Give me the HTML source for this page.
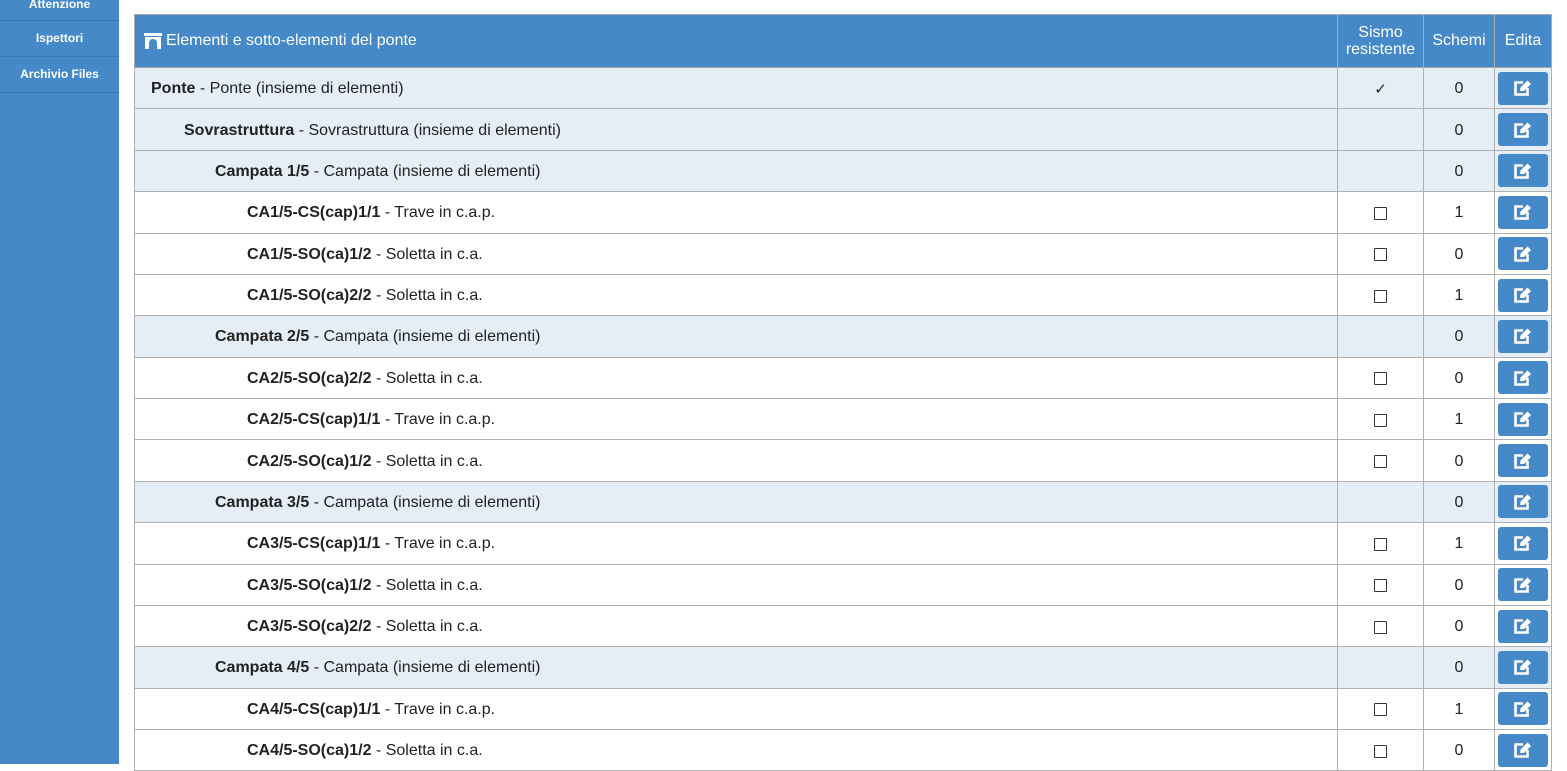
<!DOCTYPE html>
<html><head><meta charset="utf-8"><style>
body{margin:0;width:1567px;height:764px;overflow:hidden;background:#fff;font-family:"Liberation Sans",sans-serif;position:relative}
.side{position:absolute;left:0;top:0;width:119px;height:764px;background:#4589c8}
.side div{color:#fff;font-size:12px;font-weight:bold;text-align:center;height:35px;line-height:35px;border-bottom:1px solid #3a78b3}
.wrap{position:absolute;left:134px;top:14px;width:1418px}
.row{display:flex;height:41.375px;box-sizing:border-box;border-bottom:1px solid #b0b0b0;border-left:1px solid #b0b0b0;border-right:1px solid #b0b0b0;font-size:16px;color:#222}
.row>div{box-sizing:border-box;display:flex;align-items:center;padding-top:2px}
.c1{width:1203px;border-right:1px solid #b0b0b0}
.c2{width:86px;border-right:1px solid #b0b0b0;justify-content:center}
.c3{width:71px;border-right:1px solid #b0b0b0;justify-content:center}
.c4{flex:1;justify-content:center}
.g{background:#e5edf6}
.hd{height:54px;background:#4589c8;color:#fff;border:1px solid #a8a8a8;border-bottom:1px solid #a8a8a8}
.hd>div{border-color:#a8a8a8;padding-top:0!important}
.btn{width:50px;height:33px;background:#4589c8;border-radius:3px;display:flex;align-items:center;justify-content:center;margin-top:-2px}
.cb{width:11px;height:11px;border:1.5px solid #333;border-radius:1px;background:#fff}
b{font-weight:bold}
</style></head><body>
<div class="side"><div style="height:20px;line-height:8px">Attenzione</div><div>Ispettori</div><div>Archivio Files</div></div>
<div class="wrap">
<div class="row hd"><div class="c1" style="padding-left:9px;font-size:16px"><svg width="18" height="16" viewBox="0 0 18 16" style="margin-right:4px"><rect x="0" y="0" width="18" height="3" fill="#fff"/><path d="M1 4H17V16H13V10A4 4 0 0 0 5 10V16H1Z" fill="#fff"/></svg>Elementi e sotto-elementi del ponte</div><div class="c2" style="text-align:center;line-height:17px;font-size:16px">Sismo<br>resistente</div><div class="c3" style="font-size:16px">Schemi</div><div class="c4" style="font-size:16px">Edita</div></div>
<div id="rows"></div>
</div>
<script>
var d=[[0,'Ponte','Ponte (insieme di elementi)','v','0',1],[1,'Sovrastruttura','Sovrastruttura (insieme di elementi)','','0',1],[2,'Campata 1/5','Campata (insieme di elementi)','','0',1],
[3,'CA1/5-CS(cap)1/1','Trave in c.a.p.','c','1',0],[3,'CA1/5-SO(ca)1/2','Soletta in c.a.','c','0',0],[3,'CA1/5-SO(ca)2/2','Soletta in c.a.','c','1',0],
[2,'Campata 2/5','Campata (insieme di elementi)','','0',1],[3,'CA2/5-SO(ca)2/2','Soletta in c.a.','c','0',0],[3,'CA2/5-CS(cap)1/1','Trave in c.a.p.','c','1',0],[3,'CA2/5-SO(ca)1/2','Soletta in c.a.','c','0',0],
[2,'Campata 3/5','Campata (insieme di elementi)','','0',1],[3,'CA3/5-CS(cap)1/1','Trave in c.a.p.','c','1',0],[3,'CA3/5-SO(ca)1/2','Soletta in c.a.','c','0',0],[3,'CA3/5-SO(ca)2/2','Soletta in c.a.','c','0',0],
[2,'Campata 4/5','Campata (insieme di elementi)','','0',1],[3,'CA4/5-CS(cap)1/1','Trave in c.a.p.','c','1',0],[3,'CA4/5-SO(ca)1/2','Soletta in c.a.','c','0',0]];
var pad=[16,49,80,112],h='';
var ic='<svg width="20" height="18" viewBox="0 0 20 18"><path d="M10 3.5H2.5V15.5H14.5V9" fill="none" stroke="#fff" stroke-width="2.6"/><path d="M7 12L7.5 8.5L14.5 1.5L18 5L11 12Z" fill="#fff"/></svg>';
d.forEach(function(r){var s=r[3]=='v'?'<span style="font-size:15px">✓</span>':r[3]=='c'?'<div class="cb"></div>':'';
h+='<div class="row'+(r[5]?' g':'')+'"><div class="c1" style="padding-left:'+pad[r[0]]+'px"><b>'+r[1]+'</b>&nbsp;- '+r[2]+'</div><div class="c2">'+s+'</div><div class="c3">'+r[4]+'</div><div class="c4"><div class="btn">'+ic+'</div></div></div>';});
document.getElementById('rows').innerHTML=h;
</script>
</body></html>
